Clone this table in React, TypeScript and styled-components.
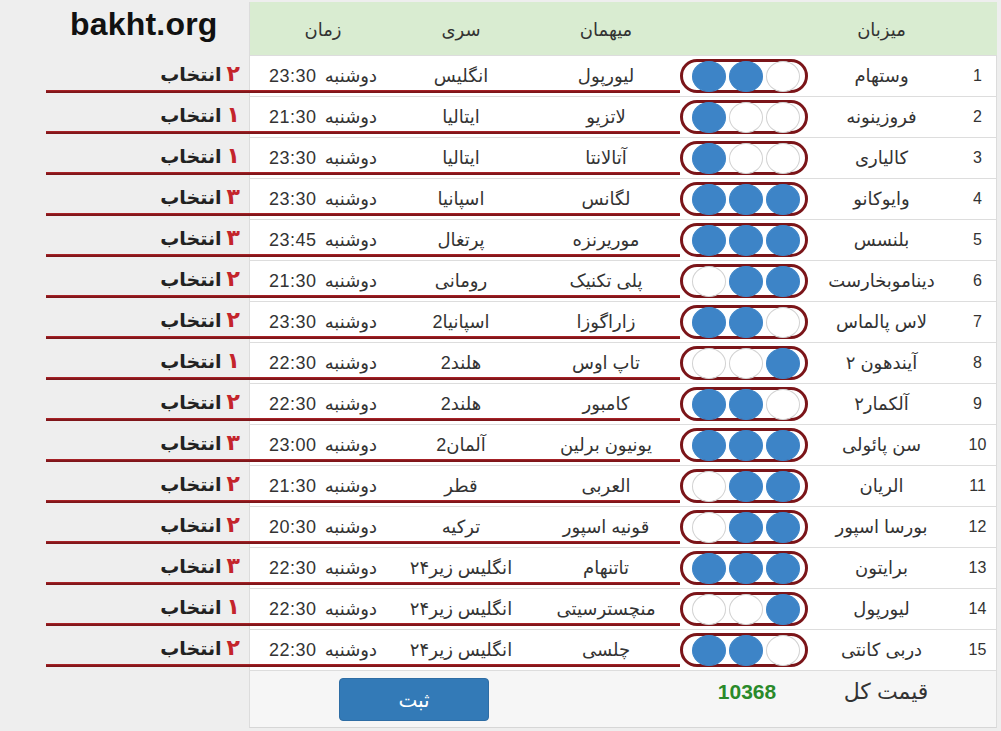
import styled, { createGlobalStyle } from "styled-components";

type Match = {
  host: string;
  guest: string;
  league: string;
  day: string;
  clock: string;
  picks: string;
  count: string;
};

const matches: Match[] = [
  { host: "وستهام", guest: "لیورپول", league: "انگلیس", day: "دوشنبه", clock: "23:30", picks: "110", count: "۲" },
  { host: "فروزینونه", guest: "لاتزیو", league: "ایتالیا", day: "دوشنبه", clock: "21:30", picks: "100", count: "۱" },
  { host: "کالیاری", guest: "آتالانتا", league: "ایتالیا", day: "دوشنبه", clock: "23:30", picks: "100", count: "۱" },
  { host: "وایوکانو", guest: "لگانس", league: "اسپانیا", day: "دوشنبه", clock: "23:30", picks: "111", count: "۳" },
  { host: "بلنسس", guest: "موریرنزه", league: "پرتغال", day: "دوشنبه", clock: "23:45", picks: "111", count: "۳" },
  { host: "دیناموبخارست", guest: "پلی تکنیک", league: "رومانی", day: "دوشنبه", clock: "21:30", picks: "011", count: "۲" },
  { host: "لاس پالماس", guest: "زاراگوزا", league: "اسپانیا2", day: "دوشنبه", clock: "23:30", picks: "110", count: "۲" },
  { host: "آیندهون ۲", guest: "تاپ اوس", league: "هلند2", day: "دوشنبه", clock: "22:30", picks: "001", count: "۱" },
  { host: "آلکمار۲", guest: "کامبور", league: "هلند2", day: "دوشنبه", clock: "22:30", picks: "110", count: "۲" },
  { host: "سن پائولی", guest: "یونیون برلین", league: "آلمان2", day: "دوشنبه", clock: "23:00", picks: "111", count: "۳" },
  { host: "الریان", guest: "العربی", league: "قطر", day: "دوشنبه", clock: "21:30", picks: "011", count: "۲" },
  { host: "بورسا اسپور", guest: "قونیه اسپور", league: "ترکیه", day: "دوشنبه", clock: "20:30", picks: "011", count: "۲" },
  { host: "برایتون", guest: "تاتنهام", league: "انگلیس زیر۲۴", day: "دوشنبه", clock: "22:30", picks: "111", count: "۳" },
  { host: "لیورپول", guest: "منچسترسیتی", league: "انگلیس زیر۲۴", day: "دوشنبه", clock: "22:30", picks: "001", count: "۱" },
  { host: "دربی کانتی", guest: "چلسی", league: "انگلیس زیر۲۴", day: "دوشنبه", clock: "22:30", picks: "110", count: "۲" },
];

const App = () => {
  return (
    <>
      <GlobalStyle />
      <Page>
        <HeadRow>
          <HeadCell />
          <HeadCell>میزبان</HeadCell>
          <HeadCell />
          <HeadCell $pad={6}>میهمان</HeadCell>
          <HeadCell>سری</HeadCell>
          <HeadCell $edge>زمان</HeadCell>
          <Logo>bakht.org</Logo>
        </HeadRow>

        {matches.map((m, i) => (
          <Row key={i}>
            <NumCell>{i + 1}</NumCell>
            <Cell>{m.host}</Cell>
            <Cell>
              <Pill>
                {m.picks.split("").map((p, j) => (
                  <Dot key={j} $on={p === "1"} />
                ))}
              </Pill>
            </Cell>
            <Cell $pad={6}>{m.guest}</Cell>
            <Cell>{m.league}</Cell>
            <Cell $edge>
              <span>{m.day}</span>
              <Clock>{m.clock}</Clock>
            </Cell>
            <Choice>
              <ChoiceNum>{m.count}</ChoiceNum>
              <span>انتخاب</span>
            </Choice>
          </Row>
        ))}

        <FootRow>
          <FootCell $right />
          <FootCell $pad={9}>قیمت کل</FootCell>
          <FootCell $pad={6}>
            <Total>10368</Total>
          </FootCell>
          <FootButtonCell>
            <SubmitButton>ثبت</SubmitButton>
          </FootButtonCell>
          <div />
        </FootRow>
      </Page>
    </>
  );
};

export default App;

// columns, right to left: number, host, picks, guest, league, time, side label
const COLS = "42px 147px 128px 154px 130px 147px 249px";

const GlobalStyle = createGlobalStyle`
  html, body {
    margin: 0;
    padding: 0;
    background: #eeeeee;
    overflow: hidden;
  }
  body {
    font-family: "Liberation Sans", "DejaVu Sans", sans-serif;
    color: #333;
  }
`;

const Page = styled.div`
  width: 997px;
  padding-top: 2px;
`;

const HeadRow = styled.div`
  display: grid;
  grid-template-columns: ${COLS};
  direction: rtl;
  height: 53px;
`;

const HeadCell = styled.div<{ $pad?: number; $edge?: boolean }>`
  background: #d9ecd1;
  display: flex;
  align-items: center;
  justify-content: center;
  font-size: 18px;
  color: #333;
  padding-left: ${(p) => p.$pad || 0}px;
  padding-top: 2px;
  border-left: ${(p) => (p.$edge ? "1px solid #dcdcdc" : "none")};
`;

const Logo = styled.div`
  direction: ltr;
  padding: 6px 0 0 70px;
  font-family: "Liberation Sans", Arial, sans-serif;
  font-weight: bold;
  font-size: 32px;
  line-height: 32px;
  color: #111;
  letter-spacing: 0.2px;
`;

const Row = styled.div`
  position: relative;
  display: grid;
  grid-template-columns: ${COLS};
  direction: rtl;
  height: 41px;

  &::after {
    content: "";
    position: absolute;
    left: 46px;
    width: 634px;
    bottom: 3px;
    height: 3px;
    background: linear-gradient(#b3262b, #7e1519 60%);
  }
`;

const Cell = styled.div<{ $pad?: number; $edge?: boolean }>`
  background: #ffffff;
  border-top: 1px solid #dddddd;
  border-left: ${(p) => (p.$edge ? "1px solid #dcdcdc" : "none")};
  display: flex;
  align-items: center;
  justify-content: center;
  gap: 8px;
  padding-left: ${(p) => p.$pad || 0}px;
  font-size: 18px;
  color: #333;
  white-space: nowrap;
`;

const NumCell = styled(Cell)`
  border-right: 1px solid #dcdcdc;
  font-size: 16px;
  padding-left: 4px;
`;

const Clock = styled.span`
  font-size: 18px;
  letter-spacing: 0.5px;
  padding-top: 1px;
`;

const Pill = styled.div`
  direction: ltr;
  box-sizing: border-box;
  width: 128px;
  height: 34px;
  border: 3px solid #7b1519;
  border-radius: 18px;
  display: flex;
  align-items: center;
  gap: 3px;
  padding-left: 9px;
`;

const Dot = styled.div<{ $on: boolean }>`
  flex: none;
  box-sizing: border-box;
  width: 34px;
  height: 31px;
  border-radius: 50%;
  background: ${(p) => (p.$on ? "#3d84c7" : "#ffffff")};
  border: 1px solid ${(p) => (p.$on ? "#3d84c7" : "#d2d2d2")};
`;

const Choice = styled.div`
  display: flex;
  align-items: center;
  justify-content: flex-start;
  gap: 5px;
  padding-right: 9px;
  padding-bottom: 4px;
  font-family: "DejaVu Sans", sans-serif;
  font-weight: bold;
  font-size: 19px;
  color: #222;
`;

const ChoiceNum = styled.span`
  color: #c4242b;
  font-size: 22px;
`;

const FootRow = styled.div`
  display: grid;
  grid-template-columns: 42px 147px 128px 431px 249px;
  direction: rtl;
  height: 58px;
`;

const FootCell = styled.div<{ $pad?: number; $right?: boolean }>`
  background: #f6f6f6;
  border-top: 1px solid #dddddd;
  border-bottom: 1px solid #d6d6d6;
  border-right: ${(p) => (p.$right ? "1px solid #dcdcdc" : "none")};
  display: flex;
  align-items: center;
  justify-content: center;
  padding-left: ${(p) => p.$pad || 0}px;
  padding-bottom: 14px;
  font-size: 22px;
  color: #333;
`;

const FootButtonCell = styled.div`
  background: #f6f6f6;
  border-top: 1px solid #dddddd;
  border-bottom: 1px solid #d6d6d6;
  border-left: 1px solid #dcdcdc;
  direction: ltr;
  display: flex;
  align-items: flex-start;
  padding: 7px 0 0 89px;
`;

const Total = styled.span`
  color: #2a8a2a;
  font-weight: bold;
  font-size: 21px;
`;

const SubmitButton = styled.button`
  width: 150px;
  height: 43px;
  border: 1px solid #2e6da4;
  border-radius: 4px;
  background: #337ab7;
  color: #ffffff;
  font-family: "DejaVu Sans", sans-serif;
  font-size: 20px;
  cursor: pointer;
`;
